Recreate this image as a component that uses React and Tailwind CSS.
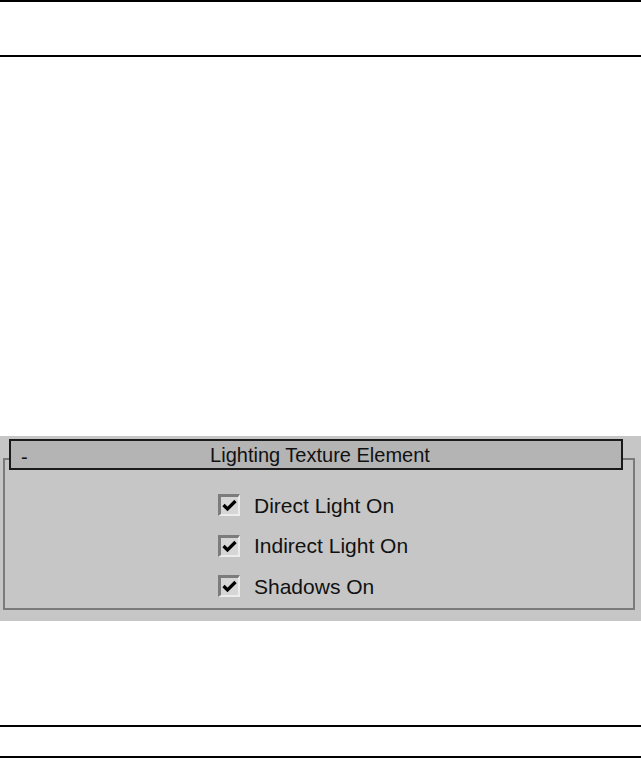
import React from 'react';

function CheckRow({ label }) {
  return (
    <div className="flex items-center h-[40.5px]">
      {/* 3D sunken checkbox */}
      <div className="w-[22px] h-[22px] border-t-[3px] border-l-[3px] border-t-[#7c7c7c] border-l-[#7c7c7c] border-b-[2px] border-r-[2px] border-b-[#ececec] border-r-[#ececec] bg-[#d6d6d6] flex items-center justify-center">
        <svg width="15" height="13" viewBox="0 0 15 13">
          <path d="M1.5 6 L5.5 10 L13.5 2" fill="none" stroke="#000" strokeWidth="3.2" />
        </svg>
      </div>
      <span className="ml-[14px] text-[21px] text-[#111] leading-none">{label}</span>
    </div>
  );
}

export default function App() {
  return (
    <div className="w-[641px] h-[758px] bg-white flex flex-col" style={{ fontFamily: '"Liberation Sans", Arial, sans-serif' }}>
      <div className="h-[2px] bg-black" />
      <div className="h-[53px]" />
      <div className="h-[2px] bg-black" />
      <div className="h-[379px]" />

      {/* rollout panel */}
      <div className="h-[185px] bg-[#c6c6c6] flex flex-col pt-[3px]">
        <div className="relative z-10 ml-[9px] mr-[18px] h-[31px] bg-[#b4b4b4] border-[2px] border-[#1a1a1a] flex items-center">
          <span className="absolute left-[10px] top-[1px] text-[20px] text-[#111]">-</span>
          <span className="flex-1 text-center text-[20px] text-[#111] pl-[8px]">Lighting Texture Element</span>
        </div>
        <div className="mt-[-12px] ml-[3px] mr-[6px] h-[152px] border-[2px] border-[#7a7a7a] flex flex-col pt-[25px] pl-[213px]">
          <CheckRow label="Direct Light On" />
          <CheckRow label="Indirect Light On" />
          <CheckRow label="Shadows On" />
        </div>
      </div>

      <div className="h-[104px]" />
      <div className="h-[2px] bg-black" />
      <div className="h-[29px]" />
      <div className="h-[2px] bg-black" />
    </div>
  );
}
